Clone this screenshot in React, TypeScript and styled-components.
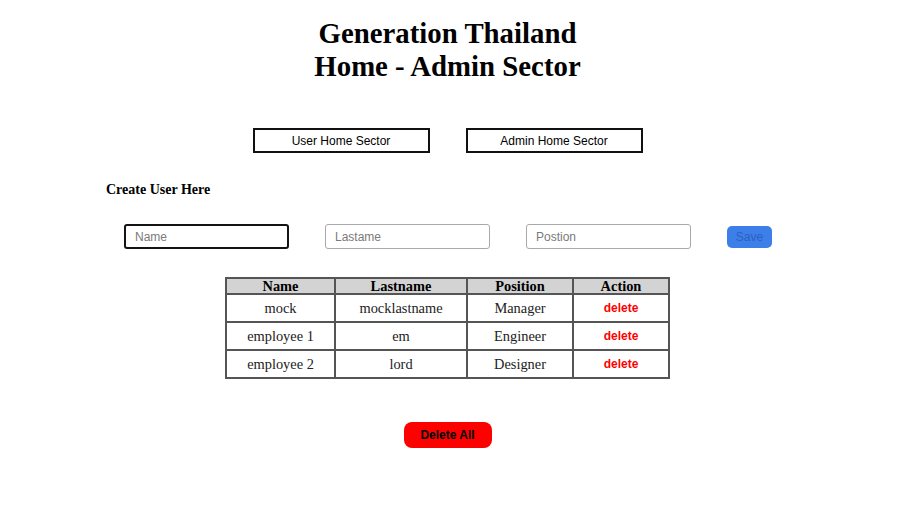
import React from "react";
import styled, { createGlobalStyle } from "styled-components";

const GlobalStyle = createGlobalStyle`
  html, body { margin: 0; padding: 0; background: #ffffff; }
  body { font-family: "Liberation Serif", "Times New Roman", serif; color: #000; }
`;

const Page = styled.div`
  width: 895px;
  min-height: 512px;
  display: flex;
  flex-direction: column;
`;

const Title = styled.h1`
  margin: 17px 0 0;
  text-align: center;
  font-size: 28.8px;
  line-height: 33px;
  font-weight: bold;
`;

const NavRow = styled.div`
  display: flex;
  justify-content: center;
  gap: 36px;
  margin-top: 45px;
`;

const NavButton = styled.button`
  width: 177px;
  height: 25px;
  box-sizing: border-box;
  border: 2px solid #111;
  background: #fff;
  font-family: "Liberation Sans", Arial, sans-serif;
  font-size: 12px;
  color: #000;
  padding: 0;
`;

const SectionTitle = styled.h4`
  margin: 29px 0 0 106px;
  font-size: 14px;
  line-height: 16px;
  font-weight: bold;
`;

const FormRow = styled.div`
  display: flex;
  align-items: center;
  margin: 26px 0 0 124px;
  height: 25px;
`;

const TextInput = styled.input<{ $focused?: boolean }>`
  width: 165px;
  height: 25px;
  box-sizing: border-box;
  margin-right: 36px;
  padding: 0 9px;
  border-radius: 3px;
  border: ${(p) => (p.$focused ? "2px solid #141414" : "1px solid #a9a9a9")};
  font-family: "Liberation Sans", Arial, sans-serif;
  font-size: 12px;
  outline: none;
  &::placeholder { color: #7a7a7a; }
`;

const SaveButton = styled.button`
  width: 45px;
  height: 22px;
  box-sizing: border-box;
  border: none;
  border-radius: 5px;
  background: #3d7fe9;
  color: #2d5fc4;
  font-family: "Liberation Sans", Arial, sans-serif;
  font-size: 12px;
  padding: 0;
`;

const Table = styled.table`
  margin: 28px auto 0;
  border-collapse: collapse;
  border: 2px solid #555;
  font-size: 14.4px;
`;

const HeadCell = styled.th<{ $w: number }>`
  width: ${(p) => p.$w}px;
  height: 14px;
  padding: 0;
  background: #d3d3d3;
  border: 2px solid #555;
  font-weight: bold;
  line-height: 14px;
`;

const Cell = styled.td`
  height: 26px;
  padding: 0;
  border: 2px solid #555;
  text-align: center;
  color: #222;
`;

const DeleteLink = styled.span`
  color: #ff0000;
  font-family: "Liberation Sans", Arial, sans-serif;
  font-weight: bold;
  font-size: 12px;
  position: relative;
  top: -1px;
`;

const DeleteAll = styled.button`
  align-self: center;
  margin-top: 43px;
  width: 88px;
  height: 26px;
  border: none;
  border-radius: 8px;
  background: #ff0000;
  color: #000;
  font-family: "Liberation Sans", Arial, sans-serif;
  font-weight: bold;
  font-size: 12px;
  padding: 0;
`;

const columns = [
  { label: "Name", w: 107 },
  { label: "Lastname", w: 130 },
  { label: "Position", w: 104 },
  { label: "Action", w: 94 },
];

const rows = [
  { name: "mock", last: "mocklastname", pos: "Manager" },
  { name: "employee 1", last: "em", pos: "Engineer" },
  { name: "employee 2", last: "lord", pos: "Designer" },
];

export default function App() {
  return (
    <Page>
      <GlobalStyle />
      <Title>
        Generation Thailand
        <br />
        Home - Admin Sector
      </Title>
      <NavRow>
        <NavButton>User Home Sector</NavButton>
        <NavButton>Admin Home Sector</NavButton>
      </NavRow>
      <SectionTitle>Create User Here</SectionTitle>
      <FormRow>
        <TextInput $focused placeholder="Name" />
        <TextInput placeholder="Lastame" />
        <TextInput placeholder="Postion" />
        <SaveButton>Save</SaveButton>
      </FormRow>
      <Table>
        <thead>
          <tr>
            {columns.map((c) => (
              <HeadCell key={c.label} $w={c.w}>
                {c.label}
              </HeadCell>
            ))}
          </tr>
        </thead>
        <tbody>
          {rows.map((r) => (
            <tr key={r.name}>
              <Cell>{r.name}</Cell>
              <Cell>{r.last}</Cell>
              <Cell>{r.pos}</Cell>
              <Cell>
                <DeleteLink>delete</DeleteLink>
              </Cell>
            </tr>
          ))}
        </tbody>
      </Table>
      <DeleteAll>Delete All</DeleteAll>
    </Page>
  );
}
